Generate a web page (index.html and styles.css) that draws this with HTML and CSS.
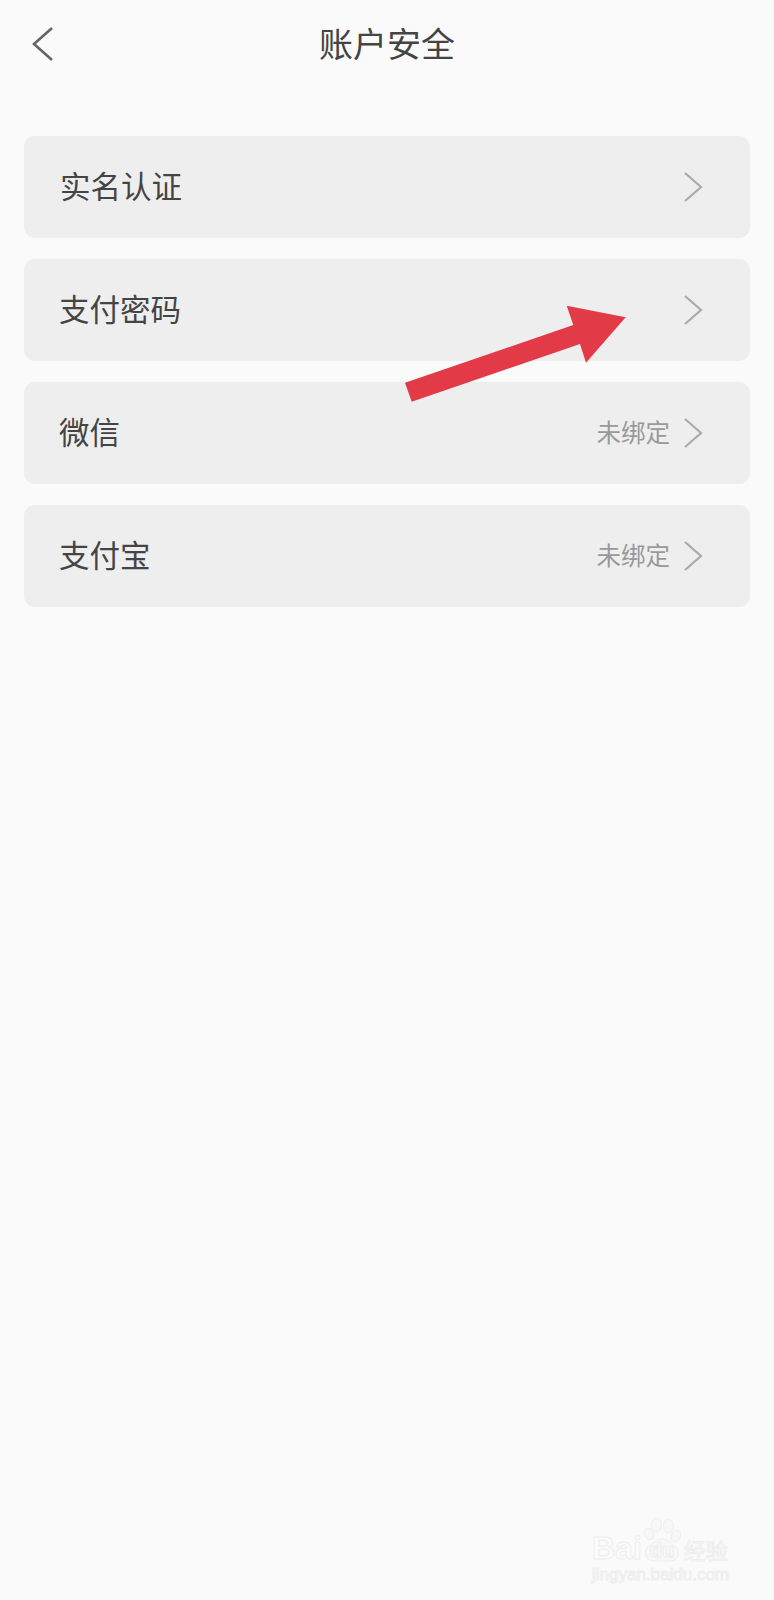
FILE: index.html
```html
<!DOCTYPE html>
<html lang="zh-CN">
<head>
<meta charset="utf-8">
<title>账户安全</title>
<link rel="stylesheet" href="styles.css">
</head>
<body>
<div class="page">
  <header class="topbar">
    <svg class="back" viewBox="0 0 24 36" width="24" height="36" aria-hidden="true"><path d="M22 2 L4 18 L22 34"/></svg>
    <h1 class="title">账户安全</h1>
  </header>
  <main class="list">
    <a class="row">
      <span class="label label-inset">实名认证</span>
      <svg class="chevron" viewBox="0 0 20 32" width="20" height="32" aria-hidden="true"><path d="M2 2 L18 16 L2 30"/></svg>
    </a>
    <a class="row">
      <span class="label">支付密码</span>
      <svg class="chevron" viewBox="0 0 20 32" width="20" height="32" aria-hidden="true"><path d="M2 2 L18 16 L2 30"/></svg>
    </a>
    <a class="row">
      <span class="label">微信</span>
      <span class="status">未绑定</span>
      <svg class="chevron" viewBox="0 0 20 32" width="20" height="32" aria-hidden="true"><path d="M2 2 L18 16 L2 30"/></svg>
    </a>
    <a class="row">
      <span class="label">支付宝</span>
      <span class="status">未绑定</span>
      <svg class="chevron" viewBox="0 0 20 32" width="20" height="32" aria-hidden="true"><path d="M2 2 L18 16 L2 30"/></svg>
    </a>
  </main>

  <!-- annotation arrow laid over the rows -->
  <svg class="arrow" viewBox="0 0 774 500" width="774" height="500" aria-hidden="true">
    <polygon points="405,382.7 411.7,401.7 580,344 586,362.7 625.7,317.3 566.7,305.7 573.3,325"/>
  </svg>

  <!-- faint corner watermark -->
  <div class="mark">
    <div class="mark-top">
      <span class="mark-bai">Bai</span>
      <div class="paw-box">
        <svg class="paw" viewBox="0 0 38 45" width="38" height="45" aria-hidden="true">
          <ellipse cx="6" cy="17" rx="4.500" ry="6" transform="rotate(-25 6 17)"/>
          <ellipse cx="13.500" cy="8" rx="5" ry="7"/>
          <ellipse cx="25.500" cy="9" rx="5" ry="7"/>
          <ellipse cx="33" cy="19" rx="4.500" ry="6" transform="rotate(25 33 19)"/>
          <path d="M19 22 C25 22 27 26 32 29 C38 33 36 44 28 44 L10 44 C2 44 0 33 6 29 C11 26 13 22 19 22 Z"/>
        </svg>
        <span class="mark-du">du</span>
      </div>
      <span class="mark-cn">经验</span>
    </div>
    <div class="mark-url">jingyan.baidu.com</div>
  </div>
</div>
</body>
</html>
```
FILE: styles.css
```css
* { box-sizing: border-box; }

html, body { margin: 0; padding: 0; }

body {
  background: #fafafa;
  font-family: "Noto Sans CJK SC", "Noto Sans", sans-serif;
}

.page {
  position: relative;
  width: 774px;
  height: 1600px;
  overflow: hidden;
  background: #fafafa;
}

.topbar {
  display: grid;
  grid-template-columns: 1fr auto 1fr;
  align-items: center;
  height: 88px;
}

.back {
  fill: none;
  stroke: #666;
  stroke-width: 2.6;
  grid-column: 1;
  margin-left: 30px;
}

.title {
  grid-column: 2;
  margin: 0 0 2px;
  font-size: 34px;
  font-weight: 400;
  line-height: 44px;
  color: #444;
}

.list {
  display: flex;
  flex-direction: column;
  gap: 21px;
  margin: 48px 24px 0;
}

.row {
  display: flex;
  align-items: center;
  height: 102px;
  padding: 0 47px 0 35px;
  background: #eee;
  border-radius: 11px;
}

.label {
  margin-bottom: 4px;
  font-size: 30.5px;
  line-height: 40px;
  color: #444;
}

.label-inset { margin-left: 1px; }

.status {
  margin: 0 0 3px auto;
  font-size: 24.5px;
  line-height: 32px;
  color: #999;
}

.status + .chevron { margin-left: 13px; }

.label + .chevron { margin-left: auto; }

.chevron {
  fill: none;
  stroke: #aaa;
  stroke-width: 2.2;
}

.arrow {
  position: absolute;
  left: 0;
  top: 0;
}

.arrow polygon { fill: #e33a48; }

.mark {
  position: absolute;
  left: 592px;
  top: 1519px;
  width: 145px;
  color: #fbfbfb;
  -webkit-text-stroke: 1px #eeeeee;
}

.mark-top {
  display: flex;
  align-items: flex-end;
  height: 47px;
}

.mark-bai {
  font-family: "Liberation Sans", sans-serif;
  font-size: 32px;
  line-height: 36px;
  font-weight: 700;
}

.paw-box {
  position: relative;
  width: 38px;
  height: 45px;
  margin: 0 0 4px 1px;
}

.paw {
  display: block;
  fill: #f7f7f7;
  stroke: #eeeeee;
  stroke-width: 1;
}

.mark-du {
  position: absolute;
  left: 7px;
  bottom: 1px;
  font-family: "Liberation Sans", sans-serif;
  font-size: 20px;
  line-height: 22px;
  font-weight: 700;
  color: #fafafa;
}

.mark-cn {
  margin: 0 0 0 3px;
  font-size: 22px;
  line-height: 34px;
}

.mark-url {
  margin-top: -2px;
  font-family: "Liberation Sans", sans-serif;
  font-size: 17px;
  line-height: 22px;
  white-space: nowrap;
}
```
